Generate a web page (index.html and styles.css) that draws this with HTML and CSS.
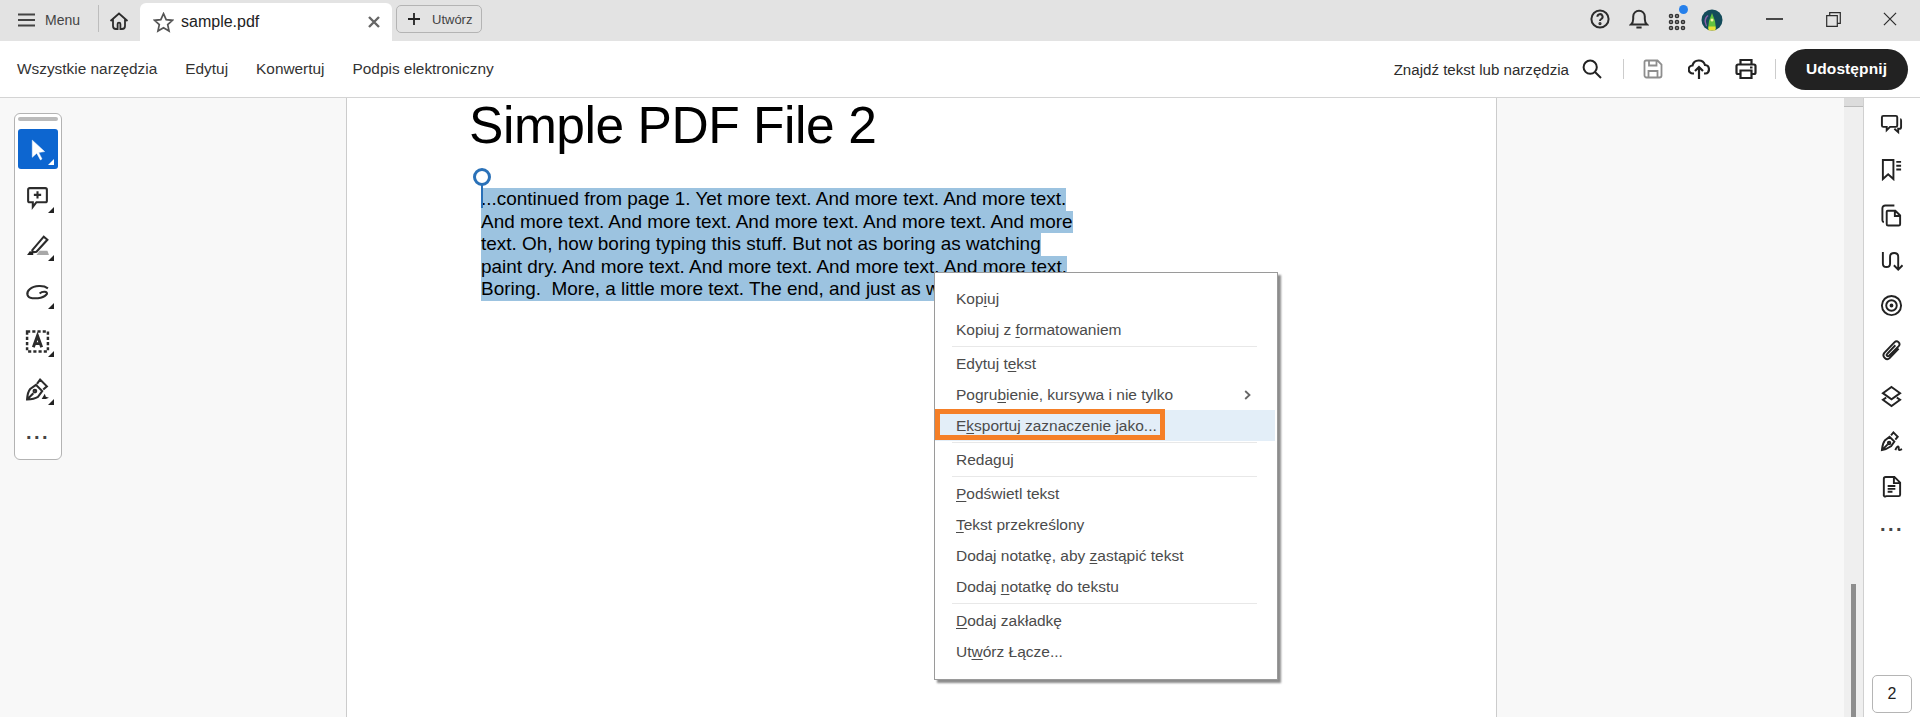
FILE: index.html
```html
<!DOCTYPE html>
<html lang="pl">
<head>
<meta charset="utf-8">
<title>sample.pdf</title>
<link rel="stylesheet" href="styles.css">
</head>
<body>
<div class="app">
  <header class="titlebar">
    <div class="menu-btn">
      <svg class="ic-menu" viewBox="0 0 18 14"><path d="M0 1.2h18M0 7h18M0 12.8h18"/></svg>
      <span>Menu</span>
    </div>
    <div class="tb-sep"></div>
    <svg class="ic-home" viewBox="0 0 20 20"><path d="M1.5 10 10 2.5 18.5 10M4 8v7a3 3 0 0 0 3 3h1.6v-5a1.4 1.4 0 0 1 2.8 0v5H13a3 3 0 0 0 3-3V8"/></svg>
    <div class="tab">
      <svg class="ic-star" viewBox="0 0 22 22"><path d="M11 1.8l2.8 6.2 6.6.7-5 4.5 1.4 6.6-5.8-3.4-5.8 3.4 1.4-6.6-5-4.5 6.6-.7z"/></svg>
      <span class="tab-name">sample.pdf</span>
      <svg class="ic-x" viewBox="0 0 12 12"><path d="M1 1l10 10M11 1 1 11"/></svg>
    </div>
    <div class="new-btn">
      <svg class="ic-plus" viewBox="0 0 12 12"><path d="M6 0v12M0 6h12"/></svg>
      <span>Utwórz</span>
    </div>
    <div class="spacer"></div>
    <svg class="ic-t ic-help" viewBox="0 0 20 20"><circle cx="10" cy="10" r="8.6"/><path d="M7.4 7.8a2.6 2.6 0 1 1 3.9 2.2c-.9.6-1.3 1-1.3 2"/><circle class="fill" cx="10" cy="14.6" r=".6"/></svg>
    <svg class="ic-t ic-bell" viewBox="0 0 20 22"><path d="M2 16.5c1.6-1.4 2.2-3 2.2-5.5V8.500a5.800 5.800 0 0 1 11.600 0V11c0 2.500.6 4.100 2.200 5.500zM7.400 19.500h5.200"/></svg>
    <div class="apps">
      <svg class="ic-apps" viewBox="0 0 18 18"><g class="dots"><circle cx="3" cy="3" r="1.500"/><circle cx="9" cy="3" r="1.500"/><circle cx="3" cy="9" r="1.500"/><circle cx="9" cy="9" r="1.500"/><circle cx="15" cy="9" r="1.500"/><circle cx="3" cy="15" r="1.500"/><circle cx="9" cy="15" r="1.500"/><circle cx="15" cy="15" r="1.500"/></g></svg>
      <span class="apps-dot"></span>
    </div>
    <svg class="avatar" viewBox="0 0 22 22"><circle cx="11" cy="11" r="10.500" fill="#134b5a"/><path d="M3.500 13a8 8 0 0 1 3-7l1 1a7 7 0 0 0-2.500 6l1 4-1 .5z" fill="#8a5fa8"/><path d="M7 20l1-8 3-8 3 8 1 8z" fill="#63c23f"/><path d="M7.500 21.500h7v-4h-7z" fill="#e9df35"/><circle cx="11" cy="11" r="1.500" fill="#f3f3a0"/></svg>
    <div class="win-btns">
      <svg class="ic-min" viewBox="0 0 18 2"><path d="M0 1h18"/></svg>
      <svg class="ic-max" viewBox="0 0 15 15"><path d="M.7 3.700h10.600v10.600H.7zM3.700 3.500V.7h10.600v10.600h-2.800"/></svg>
      <svg class="ic-close" viewBox="0 0 15 15"><path d="M1 1l13 13M14 1 1 14"/></svg>
    </div>
  </header>

  <nav class="toolbar">
    <a class="tool-link">Wszystkie narzędzia</a>
    <a class="tool-link">Edytuj</a>
    <a class="tool-link">Konwertuj</a>
    <a class="tool-link">Podpis elektroniczny</a>
    <div class="spacer"></div>
    <span class="find">Znajdź tekst lub narzędzia</span>
    <svg class="ic-search" viewBox="0 0 20 20"><circle cx="8.200" cy="8.200" r="6.600"/><path d="M13 13l6 6"/></svg>
    <div class="v-sep"></div>
    <svg class="ic-save" viewBox="0 0 20 20"><path d="M3 1.500h11.500l4 4V16.500a2 2 0 0 1-2 2H3.500a2 2 0 0 1-2-2V3a1.500 1.500 0 0 1 1.500-1.500zM6 1.500v5h7.500v-5M5.500 18.500v-6.500h9v6.500"/></svg>
    <svg class="ic-cloud" viewBox="0 0 22 22"><path d="M6 15.500H5a4 4 0 0 1-.5-8 6.500 6.500 0 0 1 12.500-.5 4.300 4.300 0 0 1 .5 8.500H16M11 21V9.500M7 13l4-4 4 4"/></svg>
    <svg class="ic-print" viewBox="0 0 22 22"><path d="M5.500 6.500V2h11v4.500M5.500 16H3a1.500 1.500 0 0 1-1.500-1.500V8A1.500 1.500 0 0 1 3 6.500h16A1.500 1.500 0 0 1 20.500 8v6.500A1.500 1.500 0 0 1 19 16h-2.500M5.500 12.500h11V20h-11zM15 9.500h2.500"/></svg>
    <div class="v-sep sep-b"></div>
    <button class="share">Udostępnij</button>
  </nav>

  <main class="workspace">
    <section class="canvas">
      <article class="page">
        <h1 class="pdf-title">Simple PDF File 2</h1>
        <div class="pdf-body">
          <div class="sel-handle"></div>
          <p class="pdf-line"><span class="sel">...continued from page 1. Yet more text. And more text. And more text.</span></p>
          <p class="pdf-line"><span class="sel">And more text. And more text. And more text. And more text. And more</span></p>
          <p class="pdf-line"><span class="sel">text. Oh, how boring typing this stuff. But not as boring as watching</span></p>
          <p class="pdf-line"><span class="sel">paint dry. And more text. And more text. And more text. And more text.</span></p>
          <p class="pdf-line"><span class="sel">Boring.&nbsp; More, a little more text. The end, and just as w</span></p>
        </div>
      </article>

      <aside class="quick-tools">
        <div class="grip"></div>
        <div class="qt active">
          <svg class="qi" viewBox="0 0 24 24"><path class="solid-w" d="M7 3v16.500l4.300-4 3.500 6.500 1.500-1-3.200-6.200 5.700-.8z"/></svg>
        </div>
        <div class="qt">
          <svg class="qi" viewBox="0 0 24 24"><path d="M4.500 3h15a1.500 1.500 0 0 1 1.500 1.500V15a1.500 1.500 0 0 1-1.500 1.500H11L7.500 21v-4.500h-3A1.500 1.500 0 0 1 3 15V4.500A1.500 1.500 0 0 1 4.500 3zM12 6v7M8.500 9.500h7"/></svg>
        </div>
        <div class="qt">
          <svg class="qi" viewBox="0 0 24 24"><path d="M7 16.500 18 3.500l3.500 3L11 18l-3.500.5z"/><path class="solid-g" d="M11 21h12l-1.500-4H14z"/><path class="solid-d" d="M2 21l2.500-3.500 3 .5.500 3z"/></svg>
        </div>
        <div class="qt">
          <svg class="qi" viewBox="0 0 24 24"><path d="M22 7C18 4 9 4 4.500 8c-4 3.500-2.500 8 2.500 8.500 5 .5 12-.5 14-4 1-2.500-4-3-7-.5"/></svg>
        </div>
        <div class="qt">
          <svg class="qi" viewBox="0 0 24 24"><path class="dash" d="M2 2.500h20v19H2z"/><path class="thick" d="M8 17.500l4-11 4 11M9.500 14h5"/></svg>
        </div>
        <div class="qt">
          <svg class="qi" viewBox="0 0 24 24"><path d="M2 21.500c.3-4 .8-7.500 3-10l5.500-4 6 6-4 5.500c-3 1.800-6 2.300-10.500 2.500zM2 21.500 8 15.500M11.500 6.500 14.500 2.500 21 9l-3.500 3"/><circle cx="9.500" cy="13.500" r="1.300"/><path class="solid-d" d="M16 21l3-5 1 3 3 1-3 1z"/></svg>
        </div>
        <div class="qt plain"><span class="more">...</span></div>
      </aside>
    </section>

    <div class="scrollbar">
      <div class="scroll-cap"></div>
      <div class="scroll-thumb"></div>
    </div>

    <aside class="rail">
      <div class="rail-icons">
        <svg class="ri" viewBox="0 0 24 24"><path d="M3.500 3h13A1.500 1.500 0 0 1 18 4.500V13a1.500 1.500 0 0 1-1.500 1.500h-6L7 18v-3.500H3.500A1.500 1.500 0 0 1 2 13V4.500A1.500 1.500 0 0 1 3.500 3zM21 6.500c.8 0 1 .5 1 1.500v6.500c0 1.200-.6 2-2 2h-1v3.500l-4-3.500"/></svg>
        <svg class="ri" viewBox="0 0 24 24"><path d="M3 2h11v20l-5.500-5L3 22zM17 4h5M17 8h5M17 12h5"/></svg>
        <svg class="ri" viewBox="0 0 24 24"><path d="M8 7h8l5 5v9a1.500 1.500 0 0 1-1.500 1.500h-11A1.500 1.500 0 0 1 7 21V8a1 1 0 0 1 1-1zM15.500 7v5.500H21M4 19c-1-.3-1.500-1-1.500-2V4.500A3 3 0 0 1 5.500 1.500H15"/></svg>
        <svg class="ri" viewBox="0 0 24 24"><path d="M3 3v12c0 5 7.500 5 7.500 0V8c0-5 8.500-5 8.500 0v13M14.500 17l4.500 4.500 4.500-4.500"/></svg>
        <svg class="ri" viewBox="0 0 24 24"><circle cx="12" cy="12" r="10"/><circle cx="12" cy="12" r="5.500"/><circle class="dotc" cx="12" cy="12" r="1"/></svg>
        <svg class="ri" viewBox="0 0 24 24"><path d="M19.500 10 10 20c-3 3-8.500-1.500-5.500-5.500L15 3.500c3-3 7 1 4.500 4L9.500 17.500c-1.500 1.500-3.500-.5-2-2L16 6.500"/></svg>
        <svg class="ri" viewBox="0 0 24 24"><path d="M12 2l9 6.500-9 6.500-9-6.500zM6.500 13 3 15.500l9 6.500 9-6.500L17.500 13"/></svg>
        <svg class="ri" viewBox="0 0 24 24"><path d="M2 21c.5-4 .5-7 3-10l5-4 5 5-3.500 5c-3 2-5.500 3.500-9.500 4zM2 21l6-6M11.500 5.500 14 2.500 18.500 7 16 10M16 21c1-3 3-5 3.500-3 .3 1.500-.5 3 1 3l2.500-1"/><circle cx="9.500" cy="13.500" r="1.300"/></svg>
        <svg class="ri" viewBox="0 0 24 24"><path d="M6 2h9l6 6v12.500a1.500 1.500 0 0 1-1.500 1.500h-13A1.500 1.500 0 0 1 4 20.500V4a2 2 0 0 1 2-2zM14.500 2v6.500H21M8 11.500h8M8 14.500h8M8 17.500h5"/></svg>
        <span class="more rail-more">...</span>
      </div>
      <div class="page-no">2</div>
    </aside>
  </main>

  <div class="context-menu">
    <div class="mi">Kop<u>i</u>uj</div>
    <div class="mi">Kopiuj z <u>f</u>ormatowaniem</div>
    <div class="msep"></div>
    <div class="mi">Edytuj t<u>e</u>kst</div>
    <div class="mi mi-sub"><span>Pogru<u>b</u>ienie, kursywa i nie tylko</span>
      <svg class="chev" viewBox="0 0 7 10"><path d="M1.200 1 5.500 5 1.200 9"/></svg>
    </div>
    <div class="mi mi-hover">E<u>k</u>sportuj zaznaczenie jako...<span class="callout"></span></div>
    <div class="msep"></div>
    <div class="mi">Redaguj</div>
    <div class="msep"></div>
    <div class="mi"><u>P</u>odświetl tekst</div>
    <div class="mi"><u>T</u>ekst przekreślony</div>
    <div class="mi">Dodaj notatkę, aby <u>z</u>astąpić tekst</div>
    <div class="mi">Dodaj <u>n</u>otatkę do tekstu</div>
    <div class="msep"></div>
    <div class="mi"><u>D</u>odaj zakładkę</div>
    <div class="mi">Ut<u>w</u>órz Łącze...</div>
  </div>
</div>
</body>
</html>
```
FILE: styles.css
```css
* { box-sizing: border-box; }
html, body { margin: 0; height: 100%; overflow: hidden; }
body { font-family: "Liberation Sans", Arial, sans-serif; color: #2c2c2c; background: #fff; }
svg { display: block; flex: none; fill: none; stroke: #2c2c2c; stroke-width: 1.800; }

.app { position: relative; width: 1920px; height: 717px; display: flex; flex-direction: column; }
.spacer { flex: 1; }

/* title bar */
.titlebar { height: 41px; flex: none; background: #e3e3e3; display: flex; align-items: center; }
.menu-btn { display: flex; align-items: center; margin-left: 18px; width: 79px; font-size: 14px; color: #444; gap: 10px; margin-top: -2px; }
.ic-menu { width: 17px; height: 14px; stroke: #444; stroke-width: 2; }
.tb-sep { width: 1px; height: 27px; background: #bdbdbd; margin-top: -4px; margin-left: 1px; }
.ic-home { width: 20px; height: 20px; margin-left: 10px; margin-right: 11px; stroke: #2c2c2c; stroke-width: 1.800; }
.tab { align-self: flex-end; width: 252px; height: 38px; background: #fff; border-radius: 6px 6px 0 0; display: flex; align-items: center; padding: 0 11px 0 13px; font-size: 16px; color: #222; }
.ic-star { width: 21px; height: 21px; stroke: #555; stroke-width: 1.800; margin-right: 7px; }
.tab-name { flex: 1; }
.ic-x { width: 12px; height: 12px; stroke: #666; stroke-width: 2.400; margin-right: 1px; }
.new-btn { width: 86px; height: 28px; margin-left: 4px; margin-top: -3px; border: 1px solid #b4b4b4; border-radius: 5px; display: flex; align-items: center; padding-left: 11px; gap: 12px; font-size: 13px; color: #444; }
.ic-plus { width: 12px; height: 12px; stroke: #222; stroke-width: 1.800; }
.ic-t { stroke: #2c2c2c; }
.ic-help { width: 20px; height: 20px; margin-right: 19px; margin-top: -3px; stroke-width: 2; }
.ic-help .fill { fill: #2c2c2c; }
.ic-bell { width: 20px; height: 22px; margin-right: 19px; margin-top: -3px; stroke-width: 2; }
.apps { position: relative; width: 18px; height: 18px; margin-right: 15px; margin-top: 3px; }
.ic-apps { width: 18px; height: 18px; }
.ic-apps .dots circle { fill: none; stroke: #333; stroke-width: 1.600; }
.apps-dot { position: absolute; top: -8px; right: -2px; width: 9px; height: 9px; border-radius: 50%; background: #2680eb; }
.avatar { width: 22px; height: 22px; stroke: none; margin-top: -1px; }
.win-btns { display: flex; align-items: center; margin-left: 43px; margin-right: 23px; margin-top: -3px; }
.ic-min { width: 17px; height: 2px; stroke: #2c2c2c; }
.ic-max { width: 15px; height: 15px; margin-left: 43px; stroke: #2c2c2c; stroke-width: 1.200; }
.ic-close { width: 14px; height: 14px; margin-left: 42px; stroke: #2c2c2c; stroke-width: 1.300; }

/* tool bar */
.toolbar { height: 57px; flex: none; background: #fff; border-bottom: 1px solid #d4d4d4; display: flex; align-items: center; padding: 0 12px 0 17px; font-size: 15.400px; }
.tool-link { color: #333; margin-right: 28px; }
.find { color: #2c2c2c; font-size: 15.100px; margin-right: 13px; }
.ic-search { width: 20px; height: 20px; stroke: #222; stroke-width: 2; margin-right: -1px; }
.v-sep { width: 1px; height: 20px; background: #ccc; margin: 0 19px 0 22px; }
.ic-save { width: 20px; height: 20px; stroke: #8e8e8e; stroke-width: 1.800; }
.ic-cloud { width: 22px; height: 22px; margin-left: 25px; stroke: #222; stroke-width: 2.200; }
.ic-print { width: 22px; height: 22px; margin-left: 25px; stroke: #222; stroke-width: 2.200; }
.sep-b { margin: 0 9px 0 18px; }
.share { width: 123px; height: 41px; border: 0; border-radius: 21px; background: #222; color: #fff; font: bold 15.500px "Liberation Sans", Arial, sans-serif; letter-spacing: .1px; padding: 0; }

/* workspace */
.workspace { flex: 1; min-height: 0; display: flex; }
.canvas { position: relative; flex: 1; min-width: 0; background: #f8f8f8; display: flex; justify-content: center; padding-right: 1px; }
.page { width: 1151px; background: #fff; border-left: 1px solid #ccc; border-right: 1px solid #ccc; padding: 0 0 0 122px; }
.pdf-title { margin: 0; font-weight: 400; font-size: 51.500px; letter-spacing: -.45px; line-height: 54px; color: #000; }
.pdf-body { position: relative; margin-top: 36px; font-size: 18.950px; color: #000; padding-left: 12px; }
.pdf-line { margin: 0; height: 22.500px; line-height: 22.500px; white-space: nowrap; }
.sel { background: #9cc3e0; display: inline-block; height: 100%; }
.sel-handle { position: absolute; left: 4px; top: -20px; width: 18px; height: 18px; border: 3px solid #2a71b8; border-radius: 50%; }
.sel-handle::after { content: ""; position: absolute; left: 5px; top: 13px; width: 2px; height: 24px; background: #2a71b8; }

/* quick tools */
.quick-tools { position: absolute; left: 14px; top: 15px; width: 48px; height: 347px; background: #fff; border: 1px solid #b3b3b3; border-radius: 6px; padding: 3px 3px 0; }
.grip { height: 4px; background: #bbb; border-radius: 2px; margin: 0 0 8px 0; }
.qt { position: relative; width: 40px; height: 40px; margin-bottom: 8px; display: flex; align-items: center; justify-content: center; border-radius: 3px; }
.qt::after { content: ""; position: absolute; right: 4px; bottom: 4px; width: 0; height: 0; border-left: 6px solid transparent; border-bottom: 6px solid #222; }
.qt.plain::after { display: none; }
.qt.active { background: #0d66d0; }
.qt.active::after { border-bottom-color: #fff; }
.qi { width: 25px; height: 25px; margin-left: -1px; stroke: #2c2c2c; stroke-width: 2; }
.solid-w { fill: #fff; stroke: #fff; stroke-width: .5; }
.solid-g { fill: #a8a8a8; stroke: none; }
.solid-d { fill: #222; stroke: none; }
.dash { stroke-dasharray: 3 2; stroke-width: 2.400; }
.thick { stroke-width: 2.800; }
.more { font-size: 20px; font-weight: 700; letter-spacing: 2.500px; color: #444; line-height: 12px; transform: translateY(-5px); }

/* scrollbar */
.scrollbar { position: relative; width: 19px; flex: none; background: #efefef; }
.scroll-cap { height: 9px; background: #dcdcdc; border-bottom: 1px solid #bbb; }
.scroll-thumb { position: absolute; left: 7px; top: 486px; bottom: 0; width: 5px; background: #8e8e8e; }

/* right rail */
.rail { width: 57px; flex: none; background: #fff; border-left: 1px solid #d0d0d0; display: flex; flex-direction: column; align-items: center; padding-top: 15px; }
.rail-icons { display: flex; flex-direction: column; align-items: center; gap: 22.300px; flex: 1; }
.ri { width: 23px; height: 23px; stroke: #222; stroke-width: 2; }
.dotc { fill: #2c2c2c; }
.rail-more { margin-top: 2px; }
.page-no { width: 40px; height: 38px; margin-bottom: 4px; border: 1px solid #b5b5b5; border-radius: 5px; display: flex; align-items: center; justify-content: center; font-size: 16px; color: #222; }

/* context menu */
.context-menu { position: absolute; left: 934px; top: 272px; width: 344px; height: 408px; background: #fff; border: 1px solid #9a9a9a; box-shadow: 3px 3px 2px #8c8c8c; padding: 10px 2px 0 0; font-size: 15.500px; color: #4b4b4b; }
.mi { position: relative; height: 31px; line-height: 31px; padding-left: 21px; white-space: nowrap; }
.mi u { text-underline-offset: 2px; }
.mi-sub { display: flex; align-items: center; justify-content: space-between; padding-right: 24px; }
.chev { width: 7px; height: 10px; stroke: #666; stroke-width: 1.800; }
.mi-hover { background: #e3eef8; }
.callout { position: absolute; left: 0; top: -1px; width: 230px; height: 31px; border: 5px solid #f57f27; }
.msep { height: 1px; background: #e8e8e8; margin: 1px 18px 1px 17px; }
```
